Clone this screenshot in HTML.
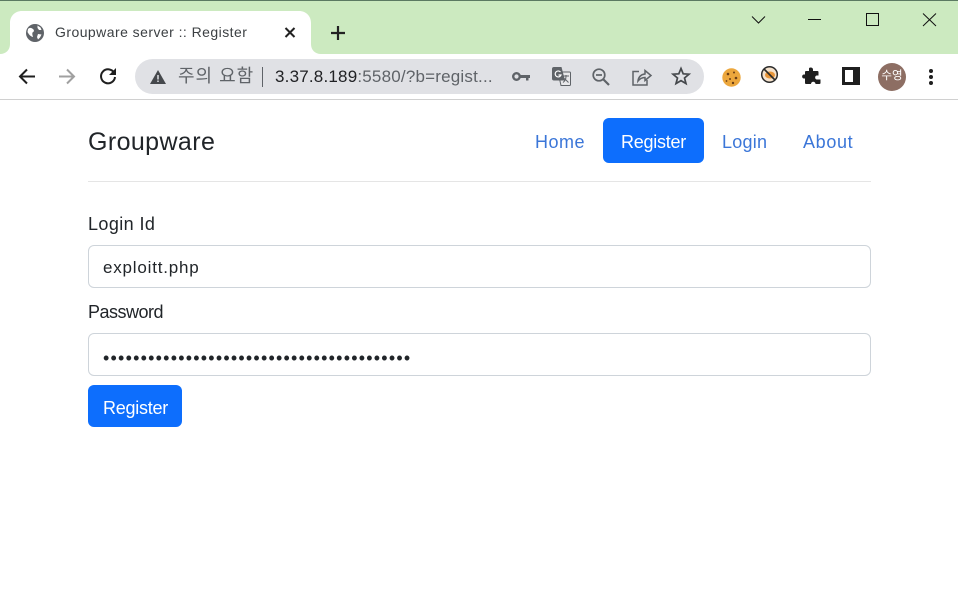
<!DOCTYPE html>
<html lang="ko"><head><meta charset="utf-8"><title>Groupware server :: Register</title>
<style>
html,body{margin:0;padding:0;background:#fff;width:958px;height:609px;overflow:hidden}
body{position:relative;font-family:"Liberation Sans","Noto Sans CJK KR",sans-serif;color:#212529}
.t{position:absolute;white-space:nowrap;line-height:1}
.a{position:absolute}
svg{position:absolute;overflow:visible}
</style></head><body>
<div class="a" style="left:0;top:0;width:958px;height:54px;background:#cceac0"></div>
<div class="a" style="left:0;top:0;width:958px;height:1px;background:#5b7a62"></div>
<div class="a" style="left:0;top:54px;width:958px;height:45px;background:#fff"></div>
<div class="a" style="left:0;top:99px;width:958px;height:1px;background:#d0d0d0"></div>
<!-- tab -->
<svg style="left:0;top:0" width="330" height="56"><path d="M0 54C6 54 10 50 10 44V23C10 16 15 11 22 11H299C306 11 311 16 311 23V44C311 50 315 54 321 54Z" fill="#fff"/></svg>
<svg style="left:26px;top:24px" width="18" height="18" viewBox="0 0 18 18"><circle cx="9" cy="9" r="9" fill="#5f6368"/><path d="M2 5C4 3 6 4 7.500 5.500 8.500 7 7.500 8 6.500 8.500 6 10 6.500 11 7 13 4.500 12.500 2.500 10 1.500 8ZM11.500 1.500 14.500 3.500 15.500 6 13 6 11.500 4ZM12 10 15.500 10.500 14 13.500 12 15.500 11 13Z" fill="#fff"/></svg>
<div class="t" style="left:55px;top:25px;font-size:14px;color:#3c4043;letter-spacing:.45px">Groupware server :: Register</div>
<svg style="left:284px;top:27px" width="12" height="12"><path d="M1.500 1 10.500 10M10.500 1 1.500 10" stroke="#222" stroke-width="2"/></svg>
<svg style="left:330px;top:25px" width="16" height="16"><path d="M8 1V15M1 8H15" stroke="#222" stroke-width="2.200"/></svg>
<!-- window controls -->
<svg style="left:750px;top:13px" width="180" height="14" fill="none" stroke="#111" stroke-width="1"><path d="M2 3.500 8.500 10 15 3.500"/><path d="M58 6.500H71"/><rect x="116.500" y=".5" width="12" height="12"/><path d="M173 .5 186 13M186 .5 173 13"/></svg>
<!-- nav icons -->
<svg style="left:18px;top:67.500px" width="18" height="18" fill="none" stroke="#1f1f1f" stroke-width="2"><path d="M17 8.500H2M9 1.500 2 8.500 9 15.500"/></svg>
<svg style="left:58px;top:67.500px" width="18" height="18" fill="none" stroke="#a0a0a0" stroke-width="2"><path d="M1 8.500H16M9 1.500 16 8.500 9 15.500"/></svg>
<svg style="left:99px;top:67px" width="18" height="18" fill="none"><path d="M15.200 6A7 7 0 1 0 16 10" stroke="#1f1f1f" stroke-width="2"/><path d="M17 1V8H10Z" fill="#1f1f1f"/></svg>
<!-- omnibox -->
<div class="a" style="left:135px;top:59px;width:569px;height:35px;border-radius:18px;background:#e0e1e5"></div>
<svg style="left:150px;top:70px" width="16" height="14"><path d="M8 0 16 14H0Z" fill="#45484c"/><path d="M8 5V9.500M8 10.500V12" stroke="#e0e1e5" stroke-width="1.500"/></svg>
<div class="t" style="left:178px;top:67px;font-size:18px;color:#5f6368;letter-spacing:1px">주의 요함</div>
<div class="a" style="left:262px;top:67px;width:1px;height:20px;background:#5f6368"></div>
<div class="t" style="left:275px;top:68px;font-size:17px;color:#202124;letter-spacing:.2px">3.37.8.189<span style="color:#5f6368">:5580/?b=regist...</span></div>
<svg style="left:512px;top:71px" width="18" height="11"><circle cx="4.500" cy="5.500" r="3.300" fill="none" stroke="#5f6368" stroke-width="2.400"/><path d="M8 4H18V7H16.500V9.500H14V7H8Z" fill="#5f6368"/></svg>
<svg style="left:552px;top:67px" width="19" height="19"><path d="M6 5H17.500A1 1 0 0 1 18.500 6V17.500A1 1 0 0 1 17.500 18.500H9Z" fill="#e8e8ea" stroke="#5f6368"/><path d="M2 0H9.500L13 13.500H2A2 2 0 0 1 0 11.500V2A2 2 0 0 1 2 0Z" fill="#5f6368"/><path d="M8.500 5A3 3 0 1 0 9 8H6.500" fill="none" stroke="#fff" stroke-width="1.200"/><path d="M11.500 9H17M14 8V9.500C14 12 13 14 11 15.500M12.500 11.500 16.500 15.500" fill="none" stroke="#5f6368"/></svg>
<svg style="left:592px;top:68px" width="18" height="18" fill="none" stroke="#5f6368" stroke-width="1.700"><circle cx="7" cy="7" r="5.800"/><path d="M11 11 17 17" stroke-width="2.200"/><path d="M4 7H10"/></svg>
<svg style="left:632px;top:68px" width="20" height="18" fill="none" stroke="#5f6368" stroke-width="1.500"><path d="M7 3.500H1V17H15V12"/><path d="M6 13C6.500 8.500 9 6.500 13 6V2.500L19 7.500 13 12.500V9.500C10.500 9.500 8 10.500 6 13Z"/></svg>
<svg style="left:672px;top:67px" width="18" height="18" fill="none" stroke="#45484c" stroke-width="1.700"><path d="M9 1.500 11.200 6.800 17 7.200 12.500 11 14 16.600 9 13.600 4 16.600 5.500 11 1 7.200 6.800 6.800Z"/></svg>
<!-- extensions -->
<svg style="left:722px;top:67.500px" width="19" height="19"><circle cx="9.500" cy="9.500" r="9.200" fill="#eca73d"/><circle cx="6" cy="6" r="1.300" fill="#6b3f16"/><circle cx="12" cy="4.500" r="1" fill="#6b3f16"/><circle cx="14" cy="10" r="1.300" fill="#6b3f16"/><circle cx="8" cy="11" r="1" fill="#6b3f16"/><circle cx="11" cy="15" r="1.200" fill="#6b3f16"/><circle cx="4.500" cy="13" r=".9" fill="#6b3f16"/></svg>
<svg style="left:761px;top:66px" width="18" height="18"><circle cx="8.500" cy="8.500" r="7.800" fill="#f5e2cc" stroke="#2b2b2b" stroke-width="1.500"/><ellipse cx="9" cy="9" rx="5" ry="3.500" fill="#e8963a"/><path d="M3 3 14 14" stroke="#2b2b2b" stroke-width="1.600"/></svg>
<svg style="left:802px;top:67px" width="19" height="19"><path d="M7 1.500C7 0 11 0 11 2.500V4H15.500A1 1 0 0 1 16.500 5V8.500H15C12.500 8.500 12.500 12.500 15 12.500H18.500V16A1 1 0 0 1 17.500 17H13.500C13.500 14 9 14 9 17H4A1 1 0 0 1 3 16V11.500H2C-.5 11.500 -.5 7.500 2 7.500H3V5A1 1 0 0 1 4 4H7Z" fill="#1f1f1f"/></svg>
<svg style="left:842px;top:67px" width="18" height="18"><rect x="1.500" y="1.500" width="15" height="15" fill="#fff" stroke="#1f1f1f" stroke-width="3"/><rect x="11" y="0" width="7" height="18" fill="#1f1f1f"/></svg>
<div class="a" style="left:878px;top:63px;width:28px;height:28px;border-radius:50%;background:#8d6e63"></div>
<div class="t" style="left:878px;width:28px;text-align:center;top:71px;font-size:11.500px;color:#fff">수영</div>
<svg style="left:928px;top:67.500px" width="6" height="18" fill="#1f1f1f"><circle cx="3" cy="3" r="2"/><circle cx="3" cy="9" r="2"/><circle cx="3" cy="15" r="2"/></svg>
<!-- page -->
<div class="t" style="left:88px;top:130px;font-size:25px;color:#212529;letter-spacing:.4px">Groupware</div>
<div class="t" style="left:535px;top:133px;font-size:18px;color:#3b76d8;letter-spacing:.5px">Home</div>
<div class="a" style="left:603px;top:118px;width:101px;height:45px;border-radius:6px;background:#0d6efd"></div>
<div class="t" style="left:621px;top:133px;font-size:18px;color:#fff;letter-spacing:-.25px">Register</div>
<div class="t" style="left:722px;top:133px;font-size:18px;color:#3b76d8;letter-spacing:.25px">Login</div>
<div class="t" style="left:803px;top:133px;font-size:18px;color:#3b76d8;letter-spacing:.65px">About</div>
<div class="a" style="left:88px;top:181px;width:783px;height:1px;background:#e5e5e5"></div>
<div class="t" style="left:88px;top:215px;font-size:18px;letter-spacing:.4px">Login Id</div>
<div class="a" style="left:88px;top:245px;width:781px;height:41px;border:1px solid #ced4da;border-radius:6px;background:#fff"></div>
<div class="t" style="left:103px;top:259px;font-size:17px;letter-spacing:.8px">exploitt.php</div>
<div class="t" style="left:88px;top:303px;font-size:18px;letter-spacing:-.5px">Password</div>
<div class="a" style="left:88px;top:333px;width:781px;height:41px;border:1px solid #ced4da;border-radius:6px;background:#fff"></div>
<div class="t" style="left:103px;top:349px;font-size:18px;letter-spacing:1.220px">•••••••••••••••••••••••••••••••••••••••••</div>
<div class="a" style="left:88px;top:385px;width:94px;height:42px;border-radius:6px;background:#0d6efd"></div>
<div class="t" style="left:103px;top:399px;font-size:18px;color:#fff;letter-spacing:-.25px">Register</div>
</body></html>
